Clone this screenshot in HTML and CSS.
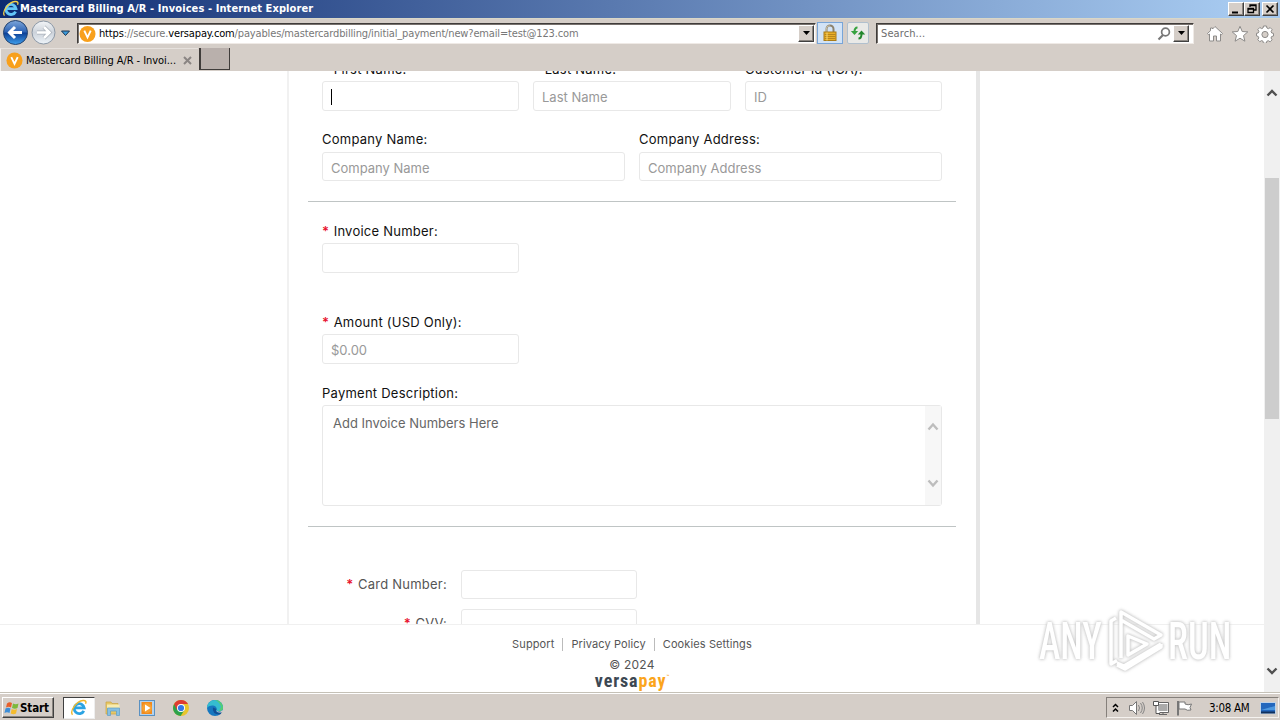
FILE: index.html
```html
<!DOCTYPE html>
<html lang="en">
<head>
<meta charset="utf-8">
<title>Mastercard Billing A/R - Invoices</title>
<link rel="stylesheet" href="styles.css">
</head>
<body>
<header class="titlebar">
  <svg class="title-icon" width="18" height="18" viewBox="0 0 18 18"><path d="M13.6 11.6A5 5 0 1 1 14 8.7H5" fill="none" stroke="#63c5f7" stroke-width="2.8"/><path d="M2.5 15.6C-.5 12 6.500 2 13 1.500c3-.2 3.500 1.200 2.500 3.200" fill="none" stroke="#f3cf4a" stroke-width="1.300"/></svg>
  <h1 class="title-text">Mastercard Billing A/R - Invoices - Internet Explorer</h1>
  <div class="caption">
    <span class="cap"><svg width="14" height="12"><path d="M3 9.500h6" stroke="#000" stroke-width="2"/></svg></span>
    <span class="cap"><svg width="14" height="12"><path d="M5 4V2h6v5H9M5 2.500h6M3 5.500h5.500v4H3zM3 6h5.500" fill="none" stroke="#000" stroke-width="1.300"/></svg></span>
    <span class="cap cap-close"><svg width="14" height="12"><path d="M3.500 2.500l7 7m0-7l-7 7" stroke="#000" stroke-width="1.700"/></svg></span>
  </div>
</header>

<nav class="toolbar">
  <svg class="navbtns" width="72" height="30" viewBox="0 0 72 30">
    <defs>
      <linearGradient id="blue" x1="0" y1="0" x2="0" y2="1"><stop offset="0" stop-color="#7da6da"/><stop offset=".48" stop-color="#2c62b4"/><stop offset=".52" stop-color="#0c3f95"/><stop offset="1" stop-color="#3fa0ee"/></linearGradient>
      <linearGradient id="pale" x1="0" y1="0" x2="0" y2="1"><stop offset="0" stop-color="#f3f5f7"/><stop offset=".5" stop-color="#ccd2da"/><stop offset="1" stop-color="#eef4f9"/></linearGradient>
    </defs>
    <circle cx="15.500" cy="14.500" r="12" fill="url(#blue)" stroke="#24436f"/>
    <path d="M22 14.500H10M15 9L9.500 14.500l5.500 5.500" fill="none" stroke="#fff" stroke-width="3"/>
    <circle cx="43.500" cy="14.500" r="11.500" fill="url(#pale)" stroke="#8b97a5"/>
    <path d="M37 14.500h12M44 9l5.500 5.500-5.500 5.500" fill="none" stroke="#a9b0b9" stroke-width="4"/>
    <path d="M37 14.500h12M44 9l5.500 5.500-5.500 5.500" fill="none" stroke="#fff" stroke-width="2.600"/>
    <path d="M61.500 13h8l-4 4.500z" fill="#3a9bdc" stroke="#1c3550"/>
  </svg>
  <div class="address">
    <svg class="fav" width="17" height="18" viewBox="0 0 18 18"><circle cx="9" cy="9" r="8.500" fill="#f8a01c"/><path d="M5.600 5.500L9 12.500l3.400-7" fill="none" stroke="#fff" stroke-width="2"/></svg>
    <span class="url"><b>https</b>://secure.<b>versapay.com</b>/payables/mastercardbilling/initial_payment/new?email=test@123.com</span>
    <span class="drop"><svg width="9" height="5"><path d="M1 0h7L4.500 4z"/></svg></span>
  </div>
  <span class="lock"><svg width="16" height="18" viewBox="0 0 16 18"><path d="M4.500 9V5a3.500 3.500 0 0 1 7 0v4" fill="none" stroke="#8c826c" stroke-width="2"/><path d="M4.200 8V5a3.500 3.500 0 0 1 3.500-3.300" fill="none" stroke="#ddd5bd" stroke-width=".8"/><rect x="2" y="8" width="12" height="8.500" fill="#e9ae27" stroke="#a97b17"/><path d="M2.500 10.500h11M2.500 12.500h11M2.500 14.500h11" stroke="#b8861c"/><path d="M5 8.500v8" stroke="#f7d675"/></svg></span>
  <span class="refresh"><svg width="16" height="16" viewBox="0 0 16 16"><path d="M7.500 2.500C5 2.500 4.500 4 4.500 7" fill="none" stroke="#36a23f" stroke-width="2"/><path d="M.8 6h7.400l-3.700 4z" fill="#36a23f"/><path d="M8.500 13.500c2.500 0 3-1.500 3-4.500" fill="none" stroke="#23872d" stroke-width="2"/><path d="M7.800 9.500h7.400L11.500 5.500z" fill="#23872d"/></svg></span>
  <div class="search">
    <span class="search-hint">Search...</span>
    <svg width="14" height="14" viewBox="0 0 14 14"><circle cx="8.500" cy="5" r="3.900" fill="#fff" stroke="#777" stroke-width="1.700"/><path d="M6 8l-4.500 4.500" stroke="#777" stroke-width="2.200"/></svg>
    <span class="drop drop-s"><svg width="9" height="5"><path d="M1 0h7L4.500 4z"/></svg></span>
  </div>
  <div class="tools">
    <svg width="18" height="18" viewBox="0 0 18 18"><path d="M9 1.500l7.500 7-1 1.200L14.500 9v7h-4v-5h-3v5h-4V9l-1 .7-1-1.200 3-2.800V3h2v1z" fill="#fff" stroke="#8d8b89" stroke-width="1"/></svg>
    <svg width="18" height="18" viewBox="0 0 18 18"><path d="M9 1.300l2.200 5.200 5.600.4-4.300 3.700 1.400 5.600L9 13.200l-4.900 3 1.400-5.600L1.200 6.900l5.600-.4z" fill="#fff" stroke="#8d8b89"/></svg>
    <svg width="18" height="18" viewBox="0 0 18 18"><path d="M7.500 1h3l.4 2 1.500.7 1.800-1.100 2 2.100-1.100 1.700.6 1.600 1.800.4v2.600l-1.900.5-.6 1.500 1.100 1.800-2 2-1.800-1.100-1.500.6-.4 1.900h-3L7 16.200l-1.500-.6-1.700 1.100-2-2 1-1.800-.6-1.500-1.700-.5V8.300L2.200 8l.7-1.700-1.100-1.700 2-2.100 1.800 1.100L7 3z" fill="#fff" stroke="#8d8b89"/><circle cx="9" cy="9.500" r="3.100" fill="#d5cec8" stroke="#8d8b89"/></svg>
  </div>
</nav>

<div class="tabs">
  <div class="tab">
    <svg class="fav" width="17" height="17" viewBox="0 0 18 18"><circle cx="9" cy="9" r="8.500" fill="#f8a01c"/><path d="M5.600 5.500L9 12.500l3.400-7" fill="none" stroke="#fff" stroke-width="2"/></svg>
    <span class="tab-text">Mastercard Billing A/R - Invoi...</span>
    <svg width="9" height="9"><path d="M1 1l7 7m0-7l-7 7" stroke="#8a8583" stroke-width="2"/></svg>
  </div>
  <div class="newtab"></div>
</div>

<div class="viewport">
  <div class="page">
    <main class="scroll">
      <form class="card">
        <div class="row row-names">
          <label class="field"><span class="label"><i>*</i> First Name:</span><span class="input tall"><span class="caret"></span></span></label>
          <label class="field"><span class="label"><i>*</i> Last Name:</span><span class="input tall">Last Name</span></label>
          <label class="field"><span class="label">Customer Id (ICA):</span><span class="input tall">ID</span></label>
        </div>
        <div class="row row-company">
          <label class="field"><span class="label">Company Name:</span><span class="input">Company Name</span></label>
          <label class="field"><span class="label">Company Address:</span><span class="input">Company Address</span></label>
        </div>
        <hr class="rule">
        <label class="field single invoice"><span class="label"><i>*</i> Invoice Number:</span><span class="input tall"></span></label>
        <label class="field single amount"><span class="label"><i>*</i> Amount (USD Only):</span><span class="input tall">$0.00</span></label>
        <label class="field description"><span class="label">Payment Description:</span>
          <span class="area"><span class="area-text">Add Invoice Numbers Here</span>
            <span class="area-bar"><svg width="12" height="9"><path d="M1.500 7.500L6 2.500l4.500 5" fill="none" stroke="#bdbdbd" stroke-width="2.400"/></svg><svg width="12" height="9"><path d="M1.500 1.500L6 6.500l4.500-5" fill="none" stroke="#bdbdbd" stroke-width="2.400"/></svg></span>
          </span>
        </label>
        <hr class="rule">
        <div class="payment">
          <label class="line"><span class="side"><i>*</i> Card Number:</span><span class="input short"></span></label>
          <label class="line"><span class="side"><i>*</i> CVV:</span><span class="input short"></span></label>
        </div>
      </form>
    </main>
    <footer class="footer">
      <div class="links"><a>Support</a><a>Privacy Policy</a><a>Cookies Settings</a></div>
      <div class="copy">© 2024</div>
      <div class="brand">versa<span class="pay">pay</span><span class="tm">™</span></div>
    </footer>
  </div>
  <div class="scrollbar">
    <svg width="12" height="10"><path d="M1.500 7.500L6 3l4.500 4.500" fill="none" stroke="#505050" stroke-width="2.400"/></svg>
    <div class="thumb"></div>
    <svg width="12" height="10"><path d="M1.500 2.500L6 7l4.500-4.500" fill="none" stroke="#505050" stroke-width="2.400"/></svg>
  </div>
  <svg class="watermark" width="220" height="80" viewBox="0 0 220 80">
    <g class="mark">
      <text transform="translate(9 57) scale(.66 1)" textLength="95" lengthAdjust="spacingAndGlyphs">ANY</text>
      <text transform="translate(138 57) scale(.66 1)" textLength="96" lengthAdjust="spacingAndGlyphs">RUN</text>
      <path class="tri" d="M91 56V10L131 33L124 37L91 18"/>
      <path class="tri" d="M98 34v19l19-11z"/>
      <path class="tri" d="M86 16l-5 3v43l6-3.500M131 42L94 64l-7-3M131 42v3L95 67l-8-4"/>
    </g>
  </svg>
</div>

<footer class="taskbar">
  <div class="start"><svg width="16" height="16" viewBox="0 0 16 16"><path d="M3 3.500Q5.500 1.500 8 3L7 7.500Q4.500 6 2 7.500z" fill="#e8602c"/><path d="M9 3.500q2.500 1.500 5.500 0L13.500 8Q11 9.500 8 8z" fill="#7db93c"/><path d="M1.500 8.500Q4 7 6.500 8.500l-1 4.500Q3 11.500.5 13z" fill="#3d8ed8"/><path d="M7.700 9q2.500 1.500 5.300 0l-1 4.500q-2.500 1.500-5.300 0z" fill="#f5bc2e"/></svg><span>Start</span></div>
  <div class="task active"><svg width="18" height="18" viewBox="0 0 18 18"><path d="M13.800 11.800A5 5 0 1 1 14.200 8.900H5" fill="none" stroke="#2ba3e2" stroke-width="2.800"/><path d="M2.500 15.800C-.5 12 6.500 2 13 1.500c3-.2 3.500 1.200 2.500 3.200" fill="none" stroke="#efb82d" stroke-width="1.400"/></svg></div>
  <div class="task"><svg width="18" height="18" viewBox="0 0 18 18"><path d="M2 3h5l1 1.500h6V15H2z" fill="#e6c766" stroke="#c9a342" stroke-width=".7"/><path d="M3 5.500h12.500V10H3z" fill="#f8ecb0"/><path d="M3.500 9h12v7.500h-3V12h-6v4.500h-3z" fill="#86bfe2" stroke="#5d9dc5" stroke-width=".7"/></svg></div>
  <div class="task"><svg width="18" height="18" viewBox="0 0 18 18"><rect x="1.500" y="1.500" width="15" height="15" fill="#b3d2ee" stroke="#5a91c2"/><rect x="3.500" y="3" width="10.500" height="12" fill="#f18a1d"/><circle cx="9" cy="9" r="5" fill="#f7a031"/><path d="M7 5.500v7L12.500 9z" fill="#fff"/></svg></div>
  <div class="task"><svg width="18" height="18" viewBox="0 0 18 18"><circle cx="9" cy="9" r="8" fill="#e8c52c"/><path d="M2.100 5A8 8 0 0 0 8.600 17L12.500 11 9 9z" fill="#2da24c"/><path d="M2.100 5A8 8 0 0 1 16 5H9L5 11z" fill="#de3b32"/><circle cx="9" cy="9" r="4" fill="#fff"/><circle cx="9" cy="9" r="3.100" fill="#3578e5"/></svg></div>
  <div class="task"><svg width="18" height="18" viewBox="0 0 18 18"><circle cx="9" cy="9" r="8" fill="#1677bf"/><path d="M1 9a8 8 0 0 1 16 0c0 2.500-2.500 3.500-5 3-1.500-.3-2-1-1.300-2C11 7 5 4.500 1 9z" fill="#35bdd0"/><path d="M9 1a8 8 0 0 1 8 8c0 2-2 3.300-4 3l2-4q-1-5-6-7z" fill="#55cd72"/><path d="M7 8.500Q5.500 15 14 15.500L16.300 13Q8 15 10.500 10z" fill="#124f94"/><path d="M11 9.500Q9.500 12.500 14 12.700L16.800 11V13.500H13Q9.500 13 11 9.500z" fill="#d6cec8"/></svg></div>
  <div class="tray">
    <svg class="chev" width="7" height="10"><path d="M1 4l2.500-2.500L6 4M1 8.500L3.500 6 6 8.500" fill="none" stroke="#000" stroke-width="1.500"/></svg>
    <svg class="spk" width="18" height="16" viewBox="0 0 18 16"><path d="M1.500 5.500h3L8.500 1.500v13L4.500 10.500h-3z" fill="#fff" stroke="#777"/><path d="M10.500 5q2 3 0 6M12.500 3q3.500 5 0 10M14.500 2q4 6 0 12" fill="none" stroke="#858585"/></svg>
    <svg class="net" width="18" height="16" viewBox="0 0 18 16"><rect x="5.500" y="3.500" width="10.500" height="8" fill="#aaa" stroke="#fff"/><path d="M5.500 2.500h11v10H5v-3M7 14.500h8M11 12v2" fill="none" stroke="#666"/><path d="M1.500 1.500h5v4h-5zM4 5.500v8h4" fill="#fff" stroke="#555"/></svg>
    <svg class="flag" width="18" height="16" viewBox="0 0 18 16"><path d="M2 1v14.500" stroke="#777" stroke-width="2"/><path d="M3 2h6v2q3 1.500 6.500 0l-1.500 3.500 1 2.500q-4 1-6-1H3z" fill="#fff" stroke="#777"/></svg>
    <span class="clock">3:08 AM</span>
    <svg class="desk" width="16" height="14"><rect x=".5" y="1.500" width="15" height="11" fill="#2367bd" stroke="#bdd2e8"/><path d="M1 9l14-4v4H1z" fill="#4d98df"/><path d="M1 11.500h14" stroke="#10305e" stroke-width="2"/></svg>
  </div>
</footer>
</body>
</html>
```
FILE: styles.css
```css
* { box-sizing: border-box; }
body { margin: 0; width: 1280px; height: 720px; overflow: hidden; display: flex; flex-direction: column; background: #fff; font-family: "DejaVu Sans Condensed", "DejaVu Sans", sans-serif; font-stretch: condensed; }
svg { display: block; flex: none; }

.titlebar { height: 18px; display: flex; align-items: center; padding: 0 2px; background: linear-gradient(90deg, #0d2a70, #a6c9ef 96%); flex: none; }
.title-text { margin: 0; font-size: 11px; line-height: 18px; font-weight: bold; color: #fff; letter-spacing: .1px; white-space: nowrap; }
.caption { margin-left: auto; display: flex; }
.cap { width: 16px; height: 14px; background: #d5cec8; border: 1px solid; border-color: #fff #404040 #404040 #fff; box-shadow: inset -1px -1px #8a8580; overflow: hidden; }
.cap-close { margin-left: 2px; }

.toolbar { height: 30px; display: flex; align-items: center; background: #d5cec8; border-top: 1px solid #d9d7c7; padding-bottom: 1px; flex: none; }
.navbtns { margin-right: 5px; }
.address, .search { height: 21px; display: flex; align-items: center; background: #fff; border: 1px solid; border-color: #3f3c3a #efeae6 #efeae6 #3f3c3a; box-shadow: inset 1px 1px #77716d; }
.address { width: 739px; padding: 1px 1px 0; }
.fav { margin-right: 3px; }
.url { font-size: 11px; color: #777; white-space: nowrap; letter-spacing: -.15px; }
.url b { font-weight: normal; color: #000; }
.drop { margin-left: auto; width: 16px; height: 17px; display: flex; align-items: center; justify-content: center; background: #d5cec8; border: 1px solid; border-color: #fff #404040 #404040 #fff; box-shadow: inset -1px -1px #8a8580; }
.lock { width: 26px; height: 22px; margin-left: 1px; background: #d2e3f6; border: 1px solid #78a5d8; display: flex; align-items: center; justify-content: center; }
.refresh { width: 22px; height: 22px; margin-left: 4px; background: #e9e9e7; border: 1px solid #b1c0ce; border-radius: 2px; display: flex; align-items: center; justify-content: center; }
.search { width: 318px; margin-left: 7px; padding: 1px 4px 0; }
.search-hint { font-size: 11px; color: #6d6d6d; margin-right: auto; letter-spacing: .1px; }
.drop-s { margin-left: 2px; }
.tools { display: flex; gap: 7px; margin-left: 12px; padding-top: 2px; }

.tabs { height: 23px; display: flex; background: #d5cec8; flex: none; }
.tab { width: 198px; height: 23px; display: flex; align-items: center; padding-left: 5px; border-left: 1px solid #f4f1ee; border-top: 1px solid #e6e1dd; }
.tab-text { width: 157px; font-size: 11px; white-space: nowrap; letter-spacing: -.06px; }
.newtab { width: 31px; height: 22px; margin-left: 1px; background: #b9b0ac; border: solid #3f3c3a; border-width: 0 1px 1px 2px; }

.viewport { height: 621px; display: flex; position: relative; flex: none; }
.page { width: 1264px; height: 621px; font-family: Inter, sans-serif; }
.scroll { height: 553px; overflow: hidden; display: flow-root; }
.card { width: 693px; margin-left: 287px; padding: 0 20px 0 19px; height: 700px; border-left: 2px solid #eee; border-left-color: #f1f1f1; border-right: 4px solid #e6e6e6; display: flow-root; }
.row { display: grid; gap: 14px; margin: 0 14px; }
.row-names { grid-template-columns: 197px 198px 197px; margin-top: -10px; }
.row-company { grid-template-columns: 303px 303px; margin-top: 20px; }
.field { display: block; }
.label { display: block; height: 16px; line-height: 16px; margin-bottom: 5px; font-size: 13px; color: #111; letter-spacing: .24px; white-space: nowrap; }
.row-names .label { margin-bottom: 4px; }
i { font-style: normal; font-weight: 600; color: #e8112d; margin-right: .5px; }
.input { display: flex; align-items: center; height: 29px; padding: 3px 8px 0; border: 1px solid #e8e8e8; border-radius: 3px; font-size: 13px; color: #999; letter-spacing: 0; white-space: nowrap; }
.input.tall { height: 30px; padding-top: 1px; }
.amount .input.tall { padding-top: 1px; }
.caret { width: 1px; height: 16px; background: #000; }
.rule { height: 1px; border: 0; margin: 20px 0 0; background: #bfc4c4; }
.single { width: 197px; margin-left: 14px; }
.invoice { margin-top: 21px; }
.invoice .label, .amount .label { margin-bottom: 4px; }
.amount { margin-top: 41px; }
.description { margin: 21px 14px 0; }
.description .label { margin-bottom: 4px; }
.area { display: flex; justify-content: space-between; height: 101px; border: 1px solid #e8e8e8; border-radius: 3px; }
.area-text { padding: 9px 10px; font-size: 13px; line-height: 16px; color: #666; letter-spacing: 0; }
.area-bar { width: 16px; display: flex; flex-direction: column; justify-content: space-between; align-items: center; padding: 16px 0 17px; background: #f7f7f7; }
.payment { margin-top: 43px; display: grid; gap: 10px; }
.line { display: flex; align-items: center; }
.side { width: 139px; margin-right: 14px; padding-bottom: 1px; text-align: right; font-size: 13px; color: #555; letter-spacing: .24px; }
.short { width: 176px; }

.footer { height: 68px; border-top: 1px solid #f0f0f0; background: #fff; color: #555; display: flex; flex-direction: column; align-items: center; }
.links { display: flex; margin-top: 13px; font-size: 11px; line-height: 13px; letter-spacing: .11px; white-space: nowrap; }
.links a { padding: 0 8px; }
.links a + a { border-left: 1px solid #bbb; }
.copy { margin-top: 6px; font-size: 12px; line-height: 15px; letter-spacing: .2px; }
.brand { font-family: Roboto, sans-serif; font-weight: 700; font-size: 18px; line-height: 18px; letter-spacing: .9px; color: #3c4853; display: flex; }
.pay { color: #fba51c; }
.tm { color: #fba51c; font-size: 5px; line-height: 9px; letter-spacing: 0; }

.scrollbar { width: 16px; background: #f0f0f0; display: flex; flex-direction: column; align-items: center; padding: 17px 0 16px; }
.thumb { width: 14px; height: 241px; margin: 80px 0 auto; background: #cdcdcd; }

.watermark { position: absolute; left: 1030px; top: 531px; }
.mark { filter: drop-shadow(0 0 1.500px #c4c4c4) drop-shadow(0 0 1.500px #ddd); }
.mark text { font-family: Roboto, sans-serif; font-weight: 500; font-size: 51px; fill: #fff; }
.tri { fill: none; stroke: #fff; stroke-width: 3.500; stroke-linejoin: round; }

.taskbar { height: 28px; display: flex; align-items: center; padding: 2px 1px 0 2px; background: #d5cec8; border-top: 1px solid #c5c1b7; box-shadow: inset 0 1px #fff; flex: none; }
.start { width: 52px; height: 21px; display: flex; align-items: center; padding-left: 1px; font-size: 11.500px; font-weight: bold; letter-spacing: -.1px; border: 1px solid; border-color: #fff #404040 #404040 #fff; box-shadow: inset -1px -1px #8a8580; margin-right: 9px; white-space: nowrap; }
.task { width: 32px; height: 22px; display: flex; align-items: center; justify-content: center; margin-right: 2px; }
.active { background: #fff; border: 1px solid; border-color: #404040 #eee #eee #404040; }
.tray { margin-left: auto; width: 173px; height: 21px; display: flex; align-items: center; border: 1px solid; border-color: #85807b #f5f2ef #f5f2ef #85807b; padding-left: 5px; }
.spk { margin-left: 9px; }
.net { margin-left: 6px; }
.flag { margin-left: 6px; }
.clock { margin-left: 15px; width: 50px; font-size: 11.500px; letter-spacing: -.3px; white-space: nowrap; }
.desk { margin-left: 1px; }
```
